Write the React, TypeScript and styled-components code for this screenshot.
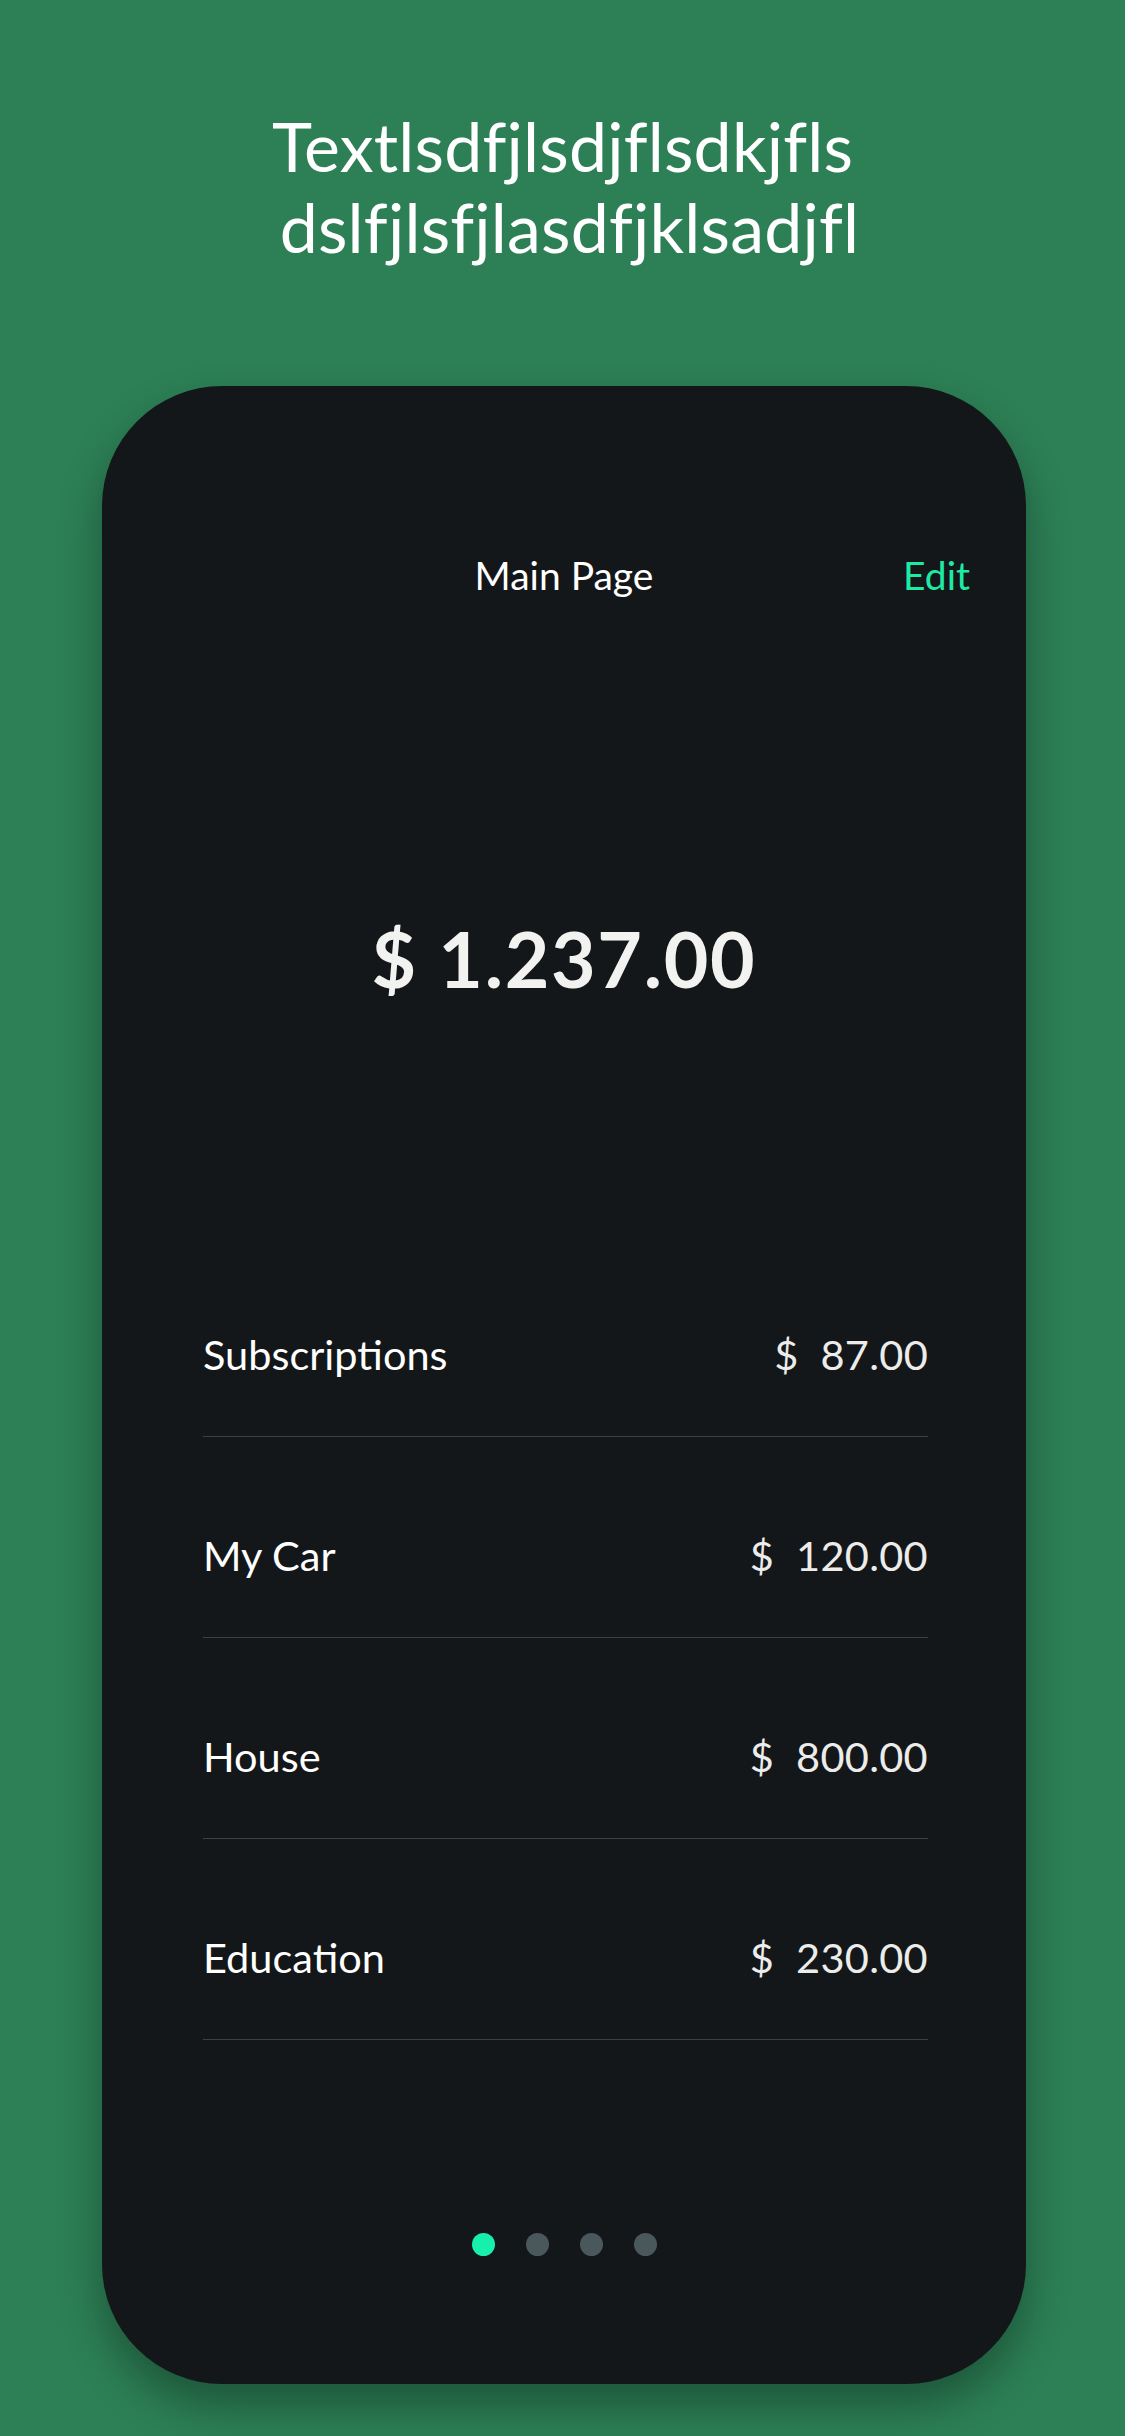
import * as React from 'react';
import styled, { createGlobalStyle } from 'styled-components';

const GlobalStyle = createGlobalStyle`
  html, body {
    margin: 0;
    padding: 0;
    background: #2d7f56;
  }
  body {
    font-family: Lato, "Noto Sans", sans-serif;
  }
`;

const Screen = styled.div`
  width: 1125px;
  min-height: 2436px;
  background: #2d7f56;
  display: flex;
  flex-direction: column;
  align-items: center;
  padding-top: 105px;
  box-sizing: border-box;
`;

const Headline = styled.h1`
  margin: 0;
  width: 680px;
  text-align: center;
  color: #ffffff;
  font-size: 68px;
  line-height: 81px;
  font-weight: 400;
  letter-spacing: 0.2px;
`;

const HeadlineLine = styled.span<{ indent?: boolean }>`
  display: block;
  padding-left: ${props => props.indent ? '14px' : '0'};
`;

const Phone = styled.div`
  margin-top: 119px;
  width: 924px;
  margin-left: 3px;
  background: #141719;
  border-radius: 120px;
  box-shadow: 0 22px 40px rgba(10, 40, 25, 0.45);
  display: flex;
  flex-direction: column;
  padding: 166px 0 128px;
  box-sizing: border-box;
`;

const NavBar = styled.div`
  display: grid;
  grid-template-columns: 1fr auto 1fr;
  align-items: center;
  padding: 0 56px;
  line-height: 46px;
  font-size: 39px;
`;

const NavTitle = styled.div`
  grid-column: 2;
  color: #ffffff;
`;

const NavAction = styled.div`
  grid-column: 3;
  justify-self: end;
  color: #1eeaa6;
`;

const Balance = styled.div`
  margin-top: 315px;
  text-align: center;
  color: #f2f2f0;
  font-size: 77px;
  line-height: 90px;
  font-weight: 700;
  letter-spacing: 1.7px;
`;

const List = styled.ul`
  list-style: none;
  margin: 233px 98px 0 101px;
  padding: 0;
`;

const Item = styled.li`
  display: flex;
  justify-content: space-between;
  align-items: center;
  padding: 96px 0 60px;
  border-bottom: 1px solid #3a4145;
  font-size: 41.5px;
  line-height: 44px;
`;

const Label = styled.span`
  color: #ffffff;
`;

const Amount = styled.span`
  color: #ececea;
  white-space: pre;
  letter-spacing: 0.3px;
`;

const Pager = styled.div`
  margin-top: 193px;
  display: flex;
  justify-content: center;
  gap: 31px;
`;

const Dot = styled.span<{ active?: boolean }>`
  width: 23px;
  height: 23px;
  border-radius: 50%;
  background: ${props => props.active ? '#17f0ac' : '#4a575c'};
`;

const items = [
  { label: 'Subscriptions', amount: '$  87.00' },
  { label: 'My Car', amount: '$  120.00' },
  { label: 'House', amount: '$  800.00' },
  { label: 'Education', amount: '$  230.00' },
];

export default function App() {
  return (
    <>
      <GlobalStyle />
      <Screen>
        <Headline>
          <HeadlineLine>Textlsdfjlsdjflsdkjfls</HeadlineLine>
          <HeadlineLine indent>dslfjlsfjlasdfjklsadjfl</HeadlineLine>
        </Headline>
        <Phone>
          <NavBar>
            <NavTitle>Main Page</NavTitle>
            <NavAction>Edit</NavAction>
          </NavBar>
          <Balance>$ 1.237.00</Balance>
          <List>
            {items.map(item => (
              <Item key={item.label}>
                <Label>{item.label}</Label>
                <Amount>{item.amount}</Amount>
              </Item>
            ))}
          </List>
          <Pager>
            {[0, 1, 2, 3].map(i => <Dot key={i} active={i === 0} />)}
          </Pager>
        </Phone>
      </Screen>
    </>
  );
}
